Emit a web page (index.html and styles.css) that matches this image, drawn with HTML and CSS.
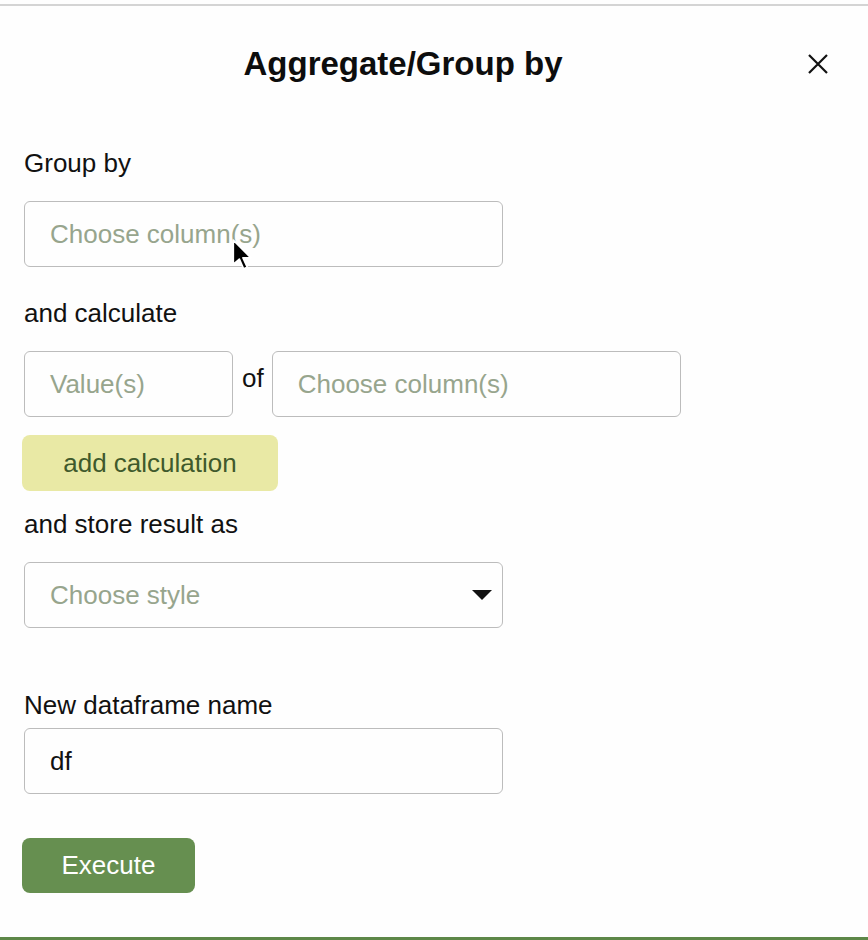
FILE: index.html
```html
<!DOCTYPE html>
<html lang="en">
<head>
<meta charset="utf-8">
<title>Aggregate/Group by</title>
<link rel="stylesheet" href="styles.css">
</head>
<body>
<div class="modal">
  <div class="header">
    <h1 class="title">Aggregate/Group by</h1>
    <button class="close" aria-label="Close">
      <svg width="22" height="22" viewBox="0 0 22 22"><path d="M2 2 L20 20 M20 2 L2 20" stroke="#111" stroke-width="2.2" fill="none"/></svg>
    </button>
  </div>
  <div class="body">
    <div class="label">Group by</div>
    <div class="field wide hover"><span class="ph">Choose column(s)</span>
      <svg class="cursor" width="22" height="34" viewBox="0 0 18 28"><path d="M1 1 L1 21 L6 16.5 L9.5 24.5 L12.5 23.2 L9 15.5 L15.5 15.5 Z" fill="#000" stroke="#fff" stroke-width="1.4" stroke-linejoin="round"/></svg>
    </div>

    <div class="label gap">and calculate</div>
    <div class="row">
      <div class="field small"><span class="ph">Value(s)</span></div>
      <span class="of">of</span>
      <div class="field mid"><span class="ph">Choose column(s)</span></div>
    </div>
    <button class="add">add calculation</button>

    <div class="label after-add">and store result as</div>
    <div class="field wide select"><span class="ph">Choose style</span><span class="caret"></span></div>

    <div class="label name">New dataframe name</div>
    <div class="field wide tight"><span class="val">df</span></div>

    <button class="exec">Execute</button>
  </div>
</div>
</body>
</html>
```
FILE: styles.css
```css
html, body {
  margin: 0;
  padding: 0;
  background: #fefefe;
  font-family: "Liberation Sans", Arial, Helvetica, sans-serif;
  color: #111;
}
.modal {
  margin-top: 4px;
  height: 936px;
  border-top: 2px solid #d4d4d4;
  border-bottom: 3px solid #5d8748;
  box-sizing: border-box;
  display: flex;
  flex-direction: column;
}
.header {
  display: flex;
  align-items: flex-start;
  padding-top: 39px;
}
.title {
  flex: 1;
  margin: 0;
  text-align: center;
  font-size: 33px;
  line-height: 38px;
  font-weight: bold;
  color: #0d0d0d;
}
.close {
  width: 62px;
  padding: 0 0 0 1px;
  margin-top: 8px;
  border: 0;
  background: none;
  display: flex;
  justify-content: flex-start;
}
.body {
  padding: 65px 0 0 24px;
  display: flex;
  flex-direction: column;
  align-items: flex-start;
}
.label {
  font-size: 26px;
  line-height: 30px;
  margin-bottom: 23px;
  color: #111;
}
.label.gap { margin-top: 31px; }
.label.after-add { margin-top: 18px; }
.label.name { margin-top: 62px; margin-bottom: 8px; }
.field {
  box-sizing: border-box;
  height: 66px;
  border: 1px solid #bcbcbc;
  border-radius: 6px;
  background: #fefefe;
  display: flex;
  align-items: center;
  padding-left: 25px;
  font-size: 26px;
}
.field.wide { width: 479px; }
.field.small { width: 209px; }
.field.mid { width: 409px; }
.hover { position: relative; }
.cursor {
  position: absolute;
  left: 207px;
  top: 37px;
}
.ph { color: #97a58d; }
.val { color: #111; }
.row {
  display: flex;
  align-items: flex-start;
}
.of {
  font-size: 26px;
  line-height: 30px;
  padding: 12px 8px 0 9px;
  color: #111;
}
.add {
  margin: 18px 0 0 -2px;
  width: 256px;
  height: 56px;
  border: 0;
  border-radius: 8px;
  background: #e9e9a5;
  color: #3f5a2c;
  font-family: inherit;
  font-size: 26px;
  padding: 0;
}
.select {
  justify-content: space-between;
  padding-right: 10px;
}
.caret {
  width: 0;
  height: 0;
  border-left: 10px solid transparent;
  border-right: 10px solid transparent;
  border-top: 10px solid #111;
}
.exec {
  margin: 44px 0 0 -2px;
  width: 173px;
  height: 55px;
  border: 0;
  border-radius: 8px;
  background: #668f50;
  color: #fff;
  font-family: inherit;
  font-size: 26px;
  padding: 0;
}
```
